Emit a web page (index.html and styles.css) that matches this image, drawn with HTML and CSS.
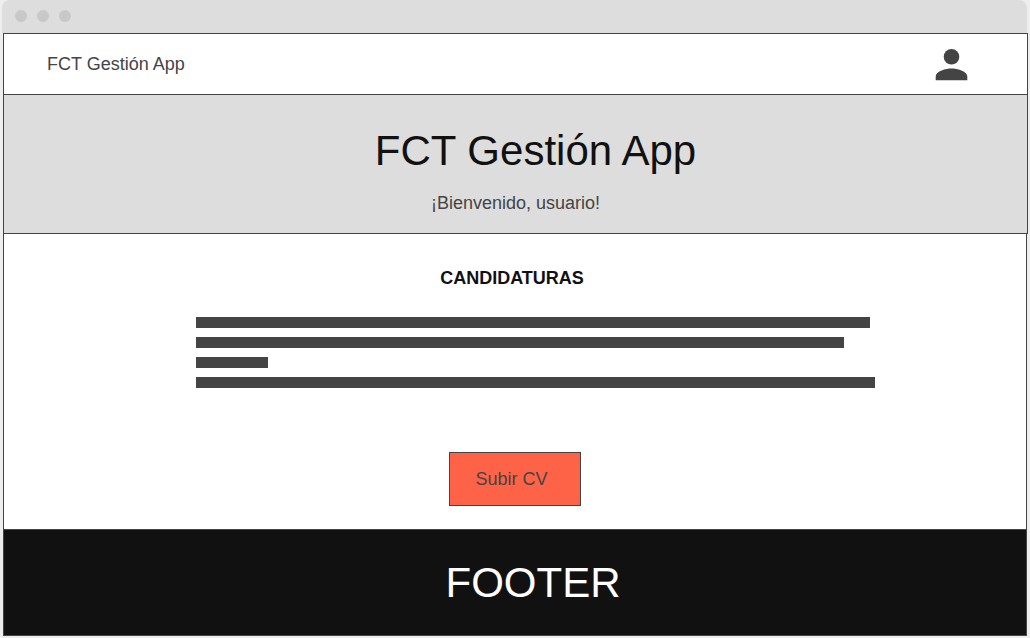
FILE: index.html
```html
<!DOCTYPE html>
<html lang="es">
<head>
<meta charset="utf-8">
<meta name="viewport" content="width=device-width, initial-scale=1">
<title>FCT Gestión App</title>
<link rel="stylesheet" href="styles.css">
</head>
<body>
<div class="window">
  <div class="titlebar">
    <span class="dot"></span>
    <span class="dot"></span>
    <span class="dot"></span>
  </div>
  <header class="navbar">
    <a class="brand" href="#">FCT Gestión App</a>
    <button class="profile" type="button" aria-label="Perfil">
      <svg class="profile-icon" viewBox="0 0 24 24" aria-hidden="true">
        <circle cx="11.750" cy="7.850" r="3.900"/>
        <path d="M11.750 13.700c-2.650 0-7.900 1.300-7.900 3.900v2h15.800v-2c0-2.600-5.250-3.900-7.900-3.900z"/>
      </svg>
    </button>
  </header>
  <section class="hero">
    <h1 class="hero-title">FCT Gestión App</h1>
    <p class="welcome">¡Bienvenido, usuario!</p>
  </section>
  <main class="content">
    <h2 class="section-title">CANDIDATURAS</h2>
    <div class="lines">
      <div class="line line-long"></div>
      <div class="line line-medium"></div>
      <div class="line line-short"></div>
      <div class="line"></div>
    </div>
    <button class="upload" type="button">Subir CV</button>
  </main>
  <footer class="footer">FOOTER</footer>
</div>
</body>
</html>
```
FILE: styles.css
```css
* {
  box-sizing: border-box;
}

body {
  margin: 0;
  min-height: 100vh;
  background: #eee;
  color: #444;
  font: 18px/20px "Liberation Sans", Arial, sans-serif;
}

.window {
  display: flex;
  flex-direction: column;
  min-height: 100vh;
  padding: 0 3px 2px 2px;
}

.titlebar {
  display: flex;
  align-items: center;
  gap: 10px;
  height: 33px;
  padding: 0 13px 1px;
  border-radius: 8px 8px 0 0;
  background: #ddd;
}

.dot {
  width: 12px;
  height: 12px;
  border-radius: 50%;
  background: #c8c8c8;
}

.navbar,
.hero {
  margin: 0 -1px 0 1px;
  border: 1px solid #444;
}

.navbar {
  display: flex;
  align-items: center;
  justify-content: space-between;
  height: 62px;
  padding: 0 51px 0 43px;
  background: #fff;
}

.brand {
  color: #444;
  text-decoration: none;
}

.profile {
  margin-top: 2px;
  padding: 0;
  border: 0;
  background: none;
  cursor: pointer;
}

.profile-icon {
  display: block;
  width: 48px;
  height: 48px;
  fill: #444;
}

.hero {
  margin-top: -1px;
  padding: 32px 0 20px;
  background: #ddd;
  text-align: center;
}

.hero-title {
  margin: 0;
  padding-left: 40px;
  color: #111;
  font-size: 42px;
  font-weight: 400;
  line-height: 48px;
}

.welcome {
  margin: 18px 0 0;
}

.content {
  display: flex;
  flex: 1;
  flex-direction: column;
  align-items: center;
  margin-left: 1px;
  padding: 34px 0 23px;
  border: solid #444;
  border-width: 0 1px;
  background: #fff;
}

.section-title {
  margin: 0;
  padding-right: 6px;
  color: #111;
  font-size: 18px;
  line-height: 20px;
}

.lines {
  display: grid;
  gap: 9px;
  width: 679px;
  max-width: 90%;
  margin: 29px 0 64px 40px;
}

.line {
  height: 11px;
  background: #444;
}

.line-long {
  margin-right: 5px;
}

.line-medium {
  margin-right: 31px;
}

.line-short {
  width: 72px;
}

.upload {
  min-height: 54px;
  padding: 0 32px 0 25px;
  border: 1px solid #444;
  background: #ff6347;
  color: #444;
  font: inherit;
  cursor: pointer;
}

.footer {
  margin-left: 1px;
  padding: 29px 0 28px 36px;
  border: 1px solid #444;
  background: #111;
  color: #fff;
  font-size: 42px;
  line-height: 48px;
  text-align: center;
}
```
